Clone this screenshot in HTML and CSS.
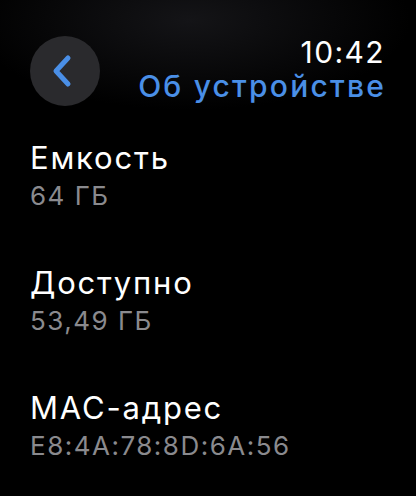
FILE: index.html
```html
<!DOCTYPE html>
<html>
<head>
<meta charset="utf-8">
<title>Об устройстве</title>
<link rel="stylesheet" href="styles.css">
</head>
<body>
<div class="screen">
  <div class="header">
    <div class="back">
      <svg width="22" height="34" viewBox="0 0 22 34">
        <path d="M17 4 L5 17 L17 30" fill="none" stroke="#4a8fe7" stroke-width="5" stroke-linecap="round" stroke-linejoin="round"/>
      </svg>
    </div>
    <div class="titles">
      <span class="time">10:42</span>
      <span class="title">Об устройстве</span>
    </div>
  </div>
  <div class="list">
    <div class="item">
      <span class="label">Емкость</span>
      <span class="value">64 ГБ</span>
    </div>
    <div class="item">
      <span class="label">Доступно</span>
      <span class="value">53,49 ГБ</span>
    </div>
    <div class="item">
      <span class="label">MAC-адрес</span>
      <span class="value">E8:4A:78:8D:6A:56</span>
    </div>
  </div>
</div>
</body>
</html>
```

FILE: styles.css
```css
body {
    margin: 0;
    padding: 0;
    background: #000;
    font-family: Inter, "Noto Sans", sans-serif;
}

.screen {
    width: 416px;
    height: 496px;
    overflow: hidden;
    background: radial-gradient(ellipse 220px 90px at 190px 20px, #141417, #000);
}

.header {
    display: flex;
    justify-content: space-between;
    align-items: flex-start;
    padding: 35px 32px 0 30px;
}

.back {
    width: 70px;
    height: 70px;
    margin-top: 1px;
    border-radius: 50%;
    background: #2a2a2d;
    display: flex;
    justify-content: center;
    align-items: center;
    padding-right: 6px;
    box-sizing: border-box;
}

.titles {
    display: flex;
    flex-direction: column;
    align-items: flex-end;
}

.time {
    color: #fff;
    font-size: 30px;
    line-height: 34px;
    font-weight: 400;
    letter-spacing: 1.4px;
    margin-right: -1px;
}

.title {
    color: #4a8fe7;
    font-size: 30px;
    line-height: 34px;
    font-weight: 500;
    letter-spacing: 2.2px;
    margin-right: -2px;
}

.list {
    display: flex;
    flex-direction: column;
    gap: 53px;
    padding: 33px 0 0 30px;
}

.item {
    display: flex;
    flex-direction: column;
    gap: 4px;
}

.label {
    color: #fff;
    font-size: 31px;
    line-height: 38px;
    letter-spacing: 1.8px;
}

.value {
    color: #8a8a8e;
    font-size: 26px;
    line-height: 30px;
    letter-spacing: 1.5px;
}
```
